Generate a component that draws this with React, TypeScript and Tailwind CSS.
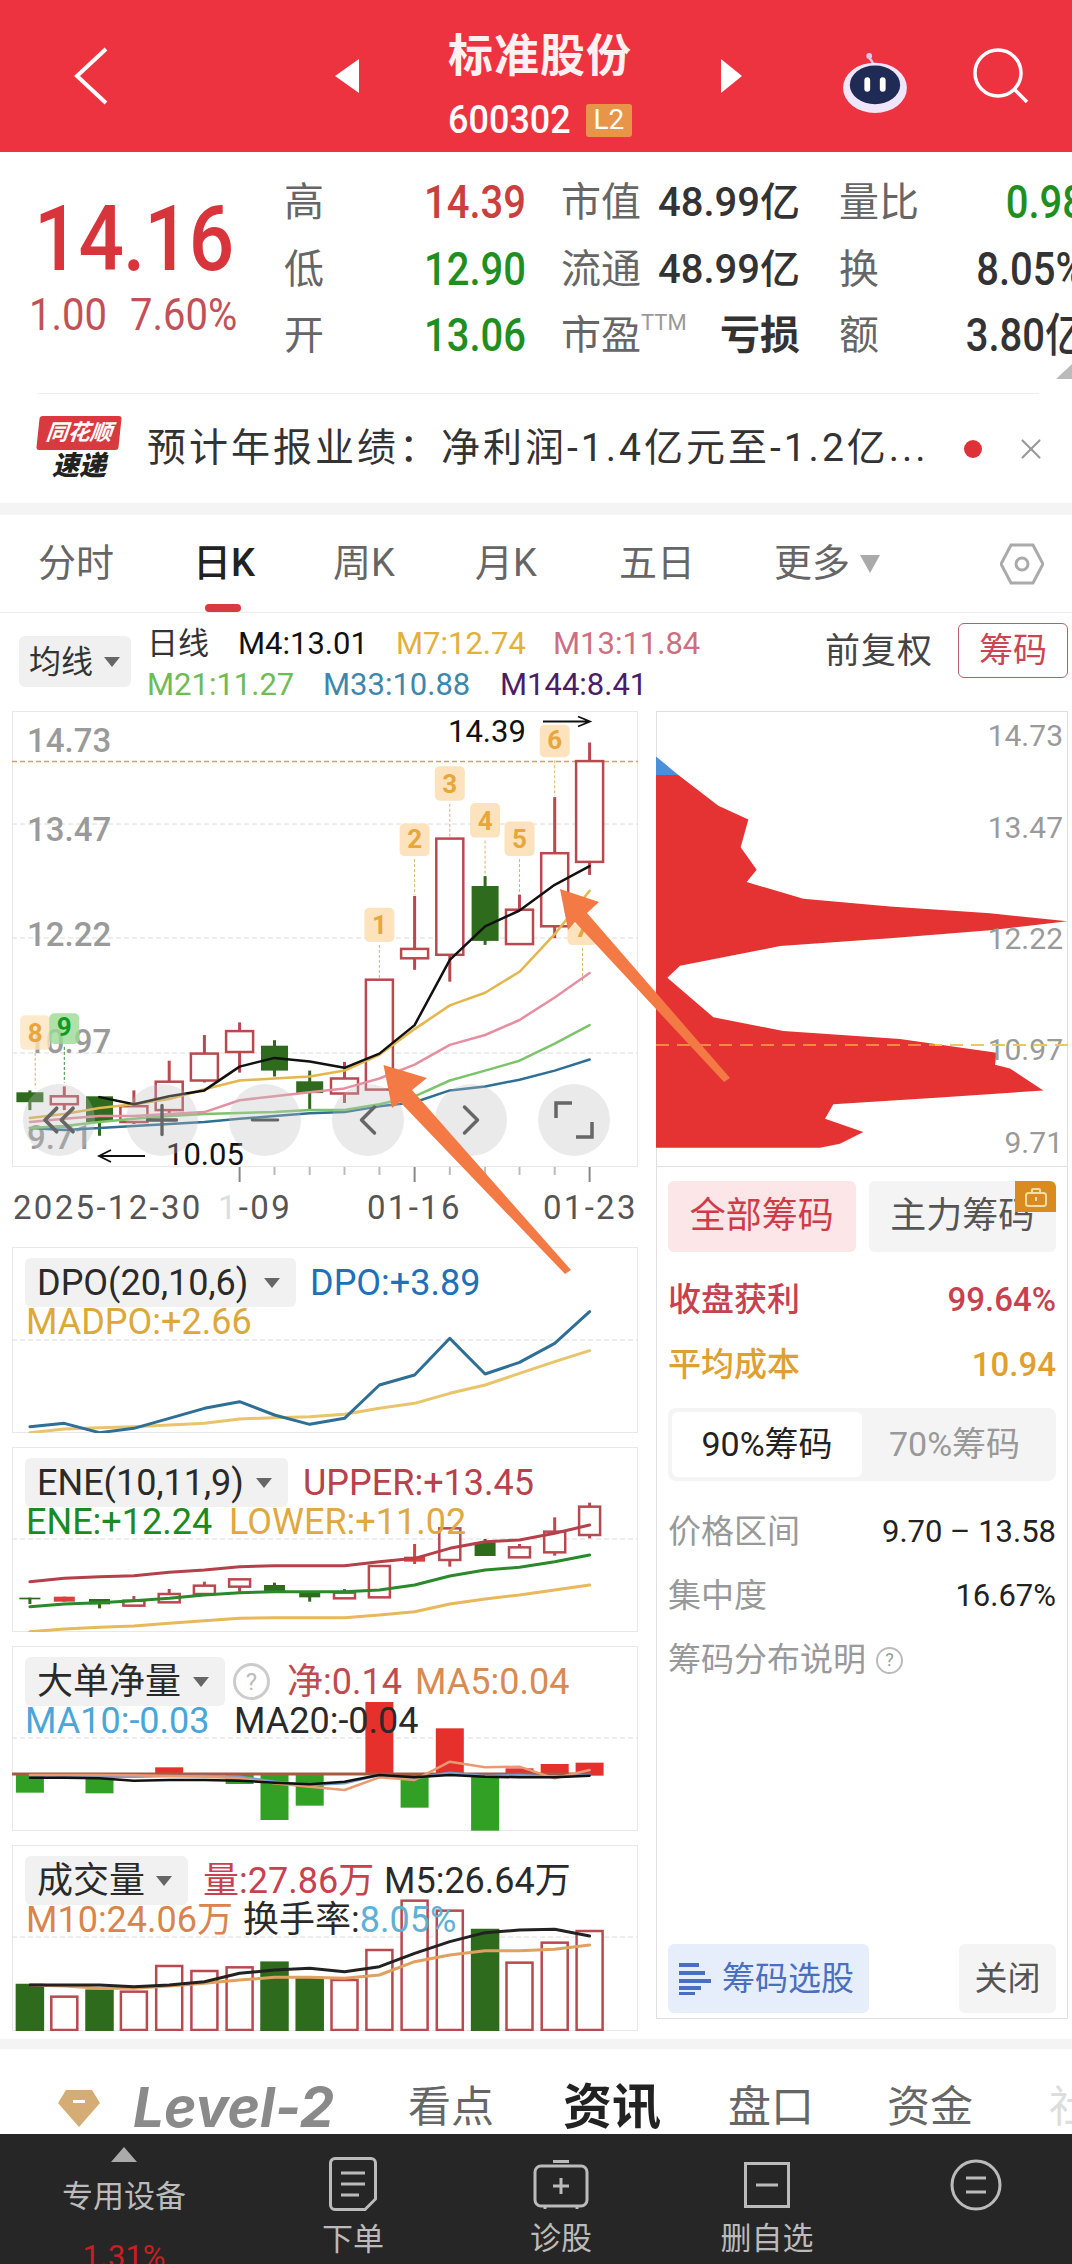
import { ChevronLeft, ChevronRight, ChevronsLeft, Minus, Plus, X as CloseIcon } from "lucide-react";
import type { ReactNode } from "react";

const CX = [72, 155, 240, 323, 408, 493, 578, 662, 747, 831, 915, 1000, 1085, 1170, 1253, 1338, 1422];
const px = (z: number) => +(z / 2.412).toFixed(1);
const mainY = (z: number) => +(620 + z / 2.53).toFixed(1);

type YFn = (z: number) => number;
// u = up candle, d = down candle, f = filled red
type Candle = [number, number, number, number, string];

function Line({ ys, y, color, w = 2.5, from = 0 }: { ys: number[]; y: YFn; color: string; w?: number; from?: number }) {
  const points = ys.map((v, i) => `${px(CX[i + from])},${y(v)}`).join(" ");
  return <polyline points={points} fill="none" stroke={color} strokeWidth={w} strokeLinejoin="round" strokeLinecap="round" />;
}

function Candles({ data, y, width }: { data: Candle[]; y: YFn; width: number }) {
  return (
    <>
      {data.map(([top, bot, hi, lo, kind], i) => {
        const cx = px(CX[i]);
        const color = kind === "d" ? "#2f6b1c" : kind === "f" ? "#d8413f" : "#b9484f";
        return (
          <g key={i}>
            <line x1={cx} x2={cx} y1={y(hi)} y2={y(lo)} stroke={color} strokeWidth={3} />
            <rect
              x={cx - width / 2}
              y={y(top)}
              width={width}
              height={y(bot) - y(top)}
              fill={kind === "u" ? "#fff" : color}
              stroke={color}
              strokeWidth={kind === "u" ? 2.5 : 0}
            />
          </g>
        );
      })}
    </>
  );
}

const mainCandles: Candle[] = [
  [1195, 1220, 1190, 1240, "d"],
  [1205, 1225, 1180, 1240, "u"],
  [1205, 1270, 1205, 1305, "d"],
  [1230, 1270, 1190, 1275, "u"],
  [1168, 1240, 1115, 1250, "u"],
  [1097, 1165, 1050, 1170, "u"],
  [1040, 1093, 1018, 1145, "u"],
  [1077, 1140, 1063, 1155, "d"],
  [1167, 1197, 1140, 1240, "d"],
  [1160, 1198, 1118, 1222, "u"],
  [910, 1188, 910, 1188, "u"],
  [832, 856, 698, 885, "u"],
  [553, 847, 553, 915, "u"],
  [673, 812, 648, 822, "d"],
  [733, 820, 695, 820, "u"],
  [590, 775, 448, 805, "u"],
  [357, 612, 310, 645, "u"],
];

const flags: [number, number, number, string, string][] = [
  [915, 728, 822, "1", "y"],
  [1000, 515, 605, "2", "y"],
  [1085, 370, 465, "3", "y"],
  [1170, 463, 558, "4", "y"],
  [1253, 510, 605, "5", "y"],
  [1338, 265, 355, "6", "y"],
  [1405, 770, 830, "7", "y"],
  [85, 1000, 1095, "8", "y"],
  [155, 995, 1080, "9", "g"],
];

function MainChart() {
  const gridLines = [824, 938, 1053];
  const axis: [string, number][] = [["14.73", 740], ["13.47", 829], ["12.22", 934], ["10.97", 1041], ["9.71", 1137]];
  return (
    <svg viewBox="12 711 626 456" width={626} height={456} className="absolute -left-px -top-px">
      <line x1={12} x2={638} y1={761.5} y2={761.5} stroke="#c9a45c" strokeDasharray="5 3" strokeWidth={1.5} />
      {gridLines.map((g) => (
        <line key={g} x1={12} x2={638} y1={g} y2={g} stroke="#dcdcdc" strokeDasharray="5 3" strokeWidth={1} />
      ))}
      {axis.map(([t, y]) => (
        <text key={t} x={27} y={y + 12} fontSize={33} fill="#9a9a9a" fontWeight={500}>
          {t}
        </text>
      ))}
      {flags.map(([x, top, bot, t, c]) => (
        <g key={t}>
          <line x1={px(x)} x2={px(x)} y1={mainY(bot)} y2={mainY(bot + 90)} stroke={c === "g" ? "#3a8a3a" : "#d9b36a"} strokeDasharray="3 2" strokeWidth={1} />
          <rect x={px(x) - 15} y={mainY(top)} width={30} height={mainY(bot) - mainY(top) - 3} rx={5} fill={c === "g" ? "#9bdb93" : "#fce3be"} fillOpacity={t === "8" || t === "9" ? 0.8 : 1} />
          <text x={px(x)} y={mainY(bot) - 11} textAnchor="middle" fontSize={26} fontWeight={700} fill={c === "g" ? "#119a22" : "#e8a63c"}>
            {t}
          </text>
        </g>
      ))}
      <Candles data={mainCandles} y={mainY} width={27} />
      <Line y={mainY} color="#2e6f95" from={0} ys={[1285, 1290, 1285, 1280, 1275, 1270, 1262, 1255, 1248, 1245, 1230, 1220, 1190, 1180, 1163, 1140, 1112]} />
      <Line y={mainY} color="#7cc46c" ys={[1285, 1280, 1270, 1262, 1255, 1250, 1247, 1245, 1240, 1240, 1225, 1205, 1165, 1140, 1115, 1072, 1025]} />
      <Line y={mainY} color="#e58fa0" ys={[1270, 1262, 1255, 1255, 1250, 1245, 1215, 1205, 1195, 1185, 1160, 1125, 1075, 1050, 1012, 955, 893]} />
      <Line y={mainY} color="#e3b64e" ys={[1260, 1250, 1235, 1225, 1212, 1187, 1165, 1160, 1155, 1140, 1100, 1035, 975, 943, 890, 795, 685]} />
      <Line y={mainY} color="#111" from={2} ys={[1207, 1225, 1205, 1190, 1130, 1108, 1117, 1133, 1097, 1025, 860, 775, 735, 670, 623]} />
      <text x={448} y={742} fontSize={31} fill="#111">14.39</text>
      <path d="M543 721.5H589M578 716.5L590 721.5L578 726.5" fill="none" stroke="#111" strokeWidth={1.8} />
      <text x={166} y={1165} fontSize={31} fill="#111">10.05</text>
      <path d="M145 1156H100M111 1150L99 1156L111 1162" fill="none" stroke="#111" strokeWidth={1.8} />
    </svg>
  );
}

function RoundBtn({ children }: { children: ReactNode }) {
  return <div className="flex size-[72px] items-center justify-center rounded-full bg-[rgba(190,190,190,0.32)] text-[#666]">{children}</div>;
}

function ChipChart() {
  const z = (a: number, b: number) => `${640 + a / 3},${(620 + b / 2.53).toFixed(1)}`;
  const red: [number, number][] = [
    [48, 392], [115, 392], [235, 470], [325, 505], [302, 575], [350, 632], [320, 663], [490, 705], [750, 725], [1050, 742], [1282, 762],
    [1050, 785], [750, 805], [420, 825], [120, 875], [82, 905], [220, 1005], [430, 1040], [780, 1060], [1070, 1095], [1065, 1125],
    [1110, 1135], [1210, 1190], [900, 1208], [580, 1225], [555, 1262], [670, 1295], [600, 1325], [540, 1335], [48, 1335],
  ];
  const labels: [string, number][] = [["14.73", 735], ["13.47", 827], ["12.22", 938], ["10.97", 1049], ["9.71", 1142]];
  return (
    <svg viewBox="656 711 412 454" width={412} height={454} className="absolute -left-px -top-px">
      <polygon points={red.map(([a, b]) => z(a, b)).join(" ")} fill="#e53232" />
      <polygon points={[z(48, 345), z(115, 392), z(48, 392)].join(" ")} fill="#4a8fdc" />
      {labels.map(([t, y]) => (
        <text key={t} x={1063} y={y + 11} textAnchor="end" fontSize={30} fill="#9a9a9a">
          {t}
        </text>
      ))}
      <line x1={656} x2={1068} y1={1045} y2={1045} stroke="#ecc75a" strokeDasharray="13 8" strokeWidth={2} />
      <line x1={656} x2={935} y1={1045} y2={1045} stroke="#f08a3c" strokeDasharray="13 8" strokeWidth={2} />
    </svg>
  );
}

function Panel({ height, btn, btnW, row1, row2, children }: { height: number; btn: string; btnW: number; row1: ReactNode; row2: ReactNode; children: ReactNode }) {
  return (
    <div className="relative w-[626px] border border-[#e8e8e8] bg-white" style={{ height }}>
      {children}
      <div className="relative pl-[12px] pt-[10px] text-[36px] leading-[40px]">
        <div className="flex items-center">
          <div className="flex h-[49px] items-center justify-between rounded-md bg-[rgba(240,240,240,0.9)] pl-[12px] pr-[16px] text-[#2a2a2a]" style={{ width: btnW }}>
            <span>{btn}</span>
            <span className="size-0 border-x-[8px] border-t-[10px] border-x-transparent border-t-[#666]" />
          </div>
          {row1}
        </div>
        <div className="-mt-[5px] flex whitespace-nowrap">{row2}</div>
      </div>
    </div>
  );
}

const dpoBlue = [560, 550, 578, 565, 535, 505, 485, 525, 553, 535, 435, 405, 295, 402, 367, 310, 215];
const dpoYellow = [578, 567, 563, 560, 555, 550, 537, 533, 530, 523, 505, 490, 460, 435, 400, 365, 332];
const eneCandles: Candle[] = [
  [1073, 1078, 1073, 1092, "d"],
  [1070, 1085, 1070, 1085, "f"],
  [1077, 1093, 1077, 1105, "d"],
  [1082, 1097, 1068, 1097, "u"],
  [1062, 1087, 1047, 1087, "u"],
  [1037, 1062, 1025, 1062, "u"],
  [1018, 1040, 1018, 1057, "u"],
  [1035, 1055, 1028, 1055, "d"],
  [1058, 1072, 1058, 1085, "d"],
  [1058, 1075, 1047, 1075, "u"],
  [978, 1072, 978, 1072, "u"],
  [950, 965, 912, 972, "f"],
  [865, 960, 865, 980, "u"],
  [907, 948, 897, 948, "d"],
  [922, 952, 912, 952, "u"],
  [875, 937, 832, 947, "u"],
  [800, 885, 788, 895, "u"],
];
const netBars: [number, number, number, string][] = [
  [0, 405, 458, "g"], [2, 405, 460, "g"], [4, 382, 405, "r"], [6, 405, 432, "g"], [7, 405, 540, "g"], [8, 405, 497, "g"], [10, 186, 405, "r"],
  [11, 405, 503, "g"], [12, 265, 405, "r"], [13, 405, 572, "g"], [14, 385, 405, "r"], [15, 372, 405, "r"], [16, 368, 407, "r"],
];
const volTops: [number, string][] = [
  [1035, "d"], [1070, "u"], [1052, "d"], [1055, "u"], [978, "u"], [993, "u"], [982, "u"], [968, "d"], [1015, "d"], [1020, "u"], [930, "u"], [782, "u"], [812, "u"], [870, "d"], [968, "u"], [908, "u"], [873, "u"],
];

function QuoteRow({ label, value, valueCls, label2, value2, value2Bold, label3, value3, value3Cls }: { label: string; value: string; valueCls: string; label2: ReactNode; value2: string; value2Bold?: boolean; label3: string; value3: string; value3Cls: string }) {
  return (
    <div className="grid h-[66.5px] grid-cols-[140px_99px_38px_95px_144px_39px_86px_160px] items-center whitespace-nowrap text-[40px]">
      <span className="text-[#666]">{label}</span>
      <span className={`scale-y-[1.15] text-right font-medium ${valueCls}`}>{value}</span>
      <span />
      <span className="text-[#666]">{label2}</span>
      <span className={`text-right text-[#333] ${value2Bold ? "font-bold" : "font-medium"}`}>{value2}</span>
      <span />
      <span className="text-[#666]">{label3}</span>
      <span className={`scale-y-[1.15] text-right font-medium ${value3Cls}`}>{value3}</span>
    </div>
  );
}

function Stat({ label, value, cls }: { label: string; value: string; cls: string }) {
  return (
    <div className={`flex items-center justify-between text-[33px] ${cls}`}>
      <span>{label}</span>
      <span>{value}</span>
    </div>
  );
}

function Robot() {
  return (
    <svg viewBox="0 0 66 62" className="mt-[14px] h-[60px] w-[66px]">
      <circle cx={27} cy={3} r={3} fill="#d9c8ee" />
      <path d="M27 5 Q30 8 31 11" stroke="#d9c8ee" strokeWidth={2.5} fill="none" />
      <ellipse cx={33} cy={36} rx={33} ry={26} fill="#efe6fb" />
      <ellipse cx={33} cy={33} rx={26} ry={20} fill="#1f2a55" />
      <rect x={22} y={25} width={6} height={15} rx={3} fill="#fff" />
      <rect x={38} y={25} width={6} height={15} rx={3} fill="#fff" />
    </svg>
  );
}

export default function App() {
  const tabs: [string, number][] = [["分时", 155], ["日K", 140], ["周K", 142], ["月K", 144], ["五日", 155]];
  return (
    <div className="relative flex h-[2264px] w-[1072px] flex-col overflow-hidden bg-white font-['Roboto','Noto_Sans_CJK_SC',sans-serif]">
      {/* header */}
      <div className="flex h-[152px] shrink-0 items-center bg-[#ee3340] text-white">
        <svg viewBox="0 0 34 58" className="ml-[74px] h-[58px] w-[34px]">
          <path d="M32 2L3 29L32 56" fill="none" stroke="#fff" strokeWidth={4} transform="translate(0 0)" />
        </svg>
        <span className="ml-[227px] size-0 border-y-[17px] border-r-[24px] border-y-transparent border-r-white" />
        <div className="ml-[89px] flex w-[184px] flex-col pt-[14px]">
          <span className="text-[45px] font-bold leading-[56px] tracking-[1px] text-[#fff1f1]">标准股份</span>
          <div className="mt-[18px] flex items-center">
            <span className="scale-y-[1.1] text-[36px] font-medium leading-[34px]">600302</span>
            <span className="ml-[15px] flex h-[33px] w-[48px] items-center justify-center rounded-[3px] bg-[#e8954a] text-[28px] leading-none">L2</span>
          </div>
        </div>
        <span className="ml-[89px] size-0 border-y-[17px] border-l-[21px] border-y-transparent border-l-white" />
        <div className="ml-[100px]">
          <Robot />
        </div>
        <svg viewBox="0 0 56 56" className="ml-[65px] size-[56px]">
          <circle cx={25} cy={25} r={23} fill="none" stroke="#fff" strokeWidth={3.5} />
          <path d="M42 42L54 54" stroke="#fff" strokeWidth={3.5} />
        </svg>
      </div>

      {/* quote */}
      <div className="relative flex h-[241px] shrink-0 items-start pt-[18px]">
        <div className="w-[284px] shrink-0 pl-[34px] pt-[34px] text-[#d8343b]">
          <div className="origin-left scale-y-[1.14] text-[80px] font-medium leading-[70px] tracking-[-1px]">14.16</div>
          <div className="-ml-[5px] mt-[22px] flex scale-y-[1.1] text-[40px] leading-[40px] text-[#c25157]">
            <span className="w-[101px]">1.00</span>
            <span>7.60%</span>
          </div>
        </div>
        <div className="w-[1000px] shrink-0">
          <QuoteRow label="高" value="14.39" valueCls="text-[#c9403f]" label2="市值" value2="48.99亿" label3="量比" value3="0.98" value3Cls="text-[#1f8f1f]" />
          <QuoteRow label="低" value="12.90" valueCls="text-[#1f8f1f]" label2="流通" value2="48.99亿" label3="换" value3="8.05%" value3Cls="text-[#333]" />
          <QuoteRow
            label="开"
            value="13.06"
            valueCls="text-[#1f8f1f]"
            label2={
              <span className="flex items-start">
                市盈<span className="mt-[6px] text-[22px] leading-[22px] text-[#999]">TTM</span>
              </span>
            }
            value2="亏损"
            value2Bold
            label3="额"
            value3="3.80亿"
            value3Cls="text-[#333]"
          />
        </div>
        <span className="absolute right-0 top-[212px] size-0 border-b-[15px] border-l-[16px] border-b-[#bbb] border-l-transparent" />
      </div>

      {/* news */}
      <div className="ml-[38px] mr-[33px] flex h-[110px] shrink-0 items-center border-t border-[#eee]">
        <div className="relative flex h-[65px] w-[82px] shrink-0 flex-col items-center">
          <div className="flex h-[35px] w-[82px] -skew-x-6 items-center justify-center rounded-[3px] bg-[#d93a3f] text-[22px] font-bold italic leading-none text-white">同花顺</div>
          <span className="mt-[1px] text-[27px] font-black italic leading-[30px] text-[#222]">速递</span>
        </div>
        <span className="ml-[27px] w-[817px] shrink-0 whitespace-nowrap text-[39px] leading-none tracking-[3px] text-[#333]">预计年报业绩：净利润-1.4亿元至-1.2亿...</span>
        <span className="size-[18px] shrink-0 rounded-full bg-[#dd3338]" />
        <CloseIcon className="ml-[32px] size-[34px] shrink-0 text-[#999]" strokeWidth={1.5} />
      </div>
      <div className="h-[12px] shrink-0 bg-[#f4f4f4]" />

      {/* kline tabs */}
      <div className="relative flex h-[98px] shrink-0 items-center border-b border-[#eee] pl-[38px] text-[38px] text-[#666]">
        {tabs.map(([t, w]) => (
          <span key={t} className={t === "日K" ? "font-medium text-[#222]" : ""} style={{ width: w }}>
            {t}
          </span>
        ))}
        <span>更多</span>
        <span className="ml-[10px] size-0 border-x-[10px] border-t-[18px] border-x-transparent border-t-[#aaa]" />
        <svg viewBox="0 0 44 42" className="absolute left-[1000px] top-[28px] h-[42px] w-[44px]">
          <polygon points="11,2 33,2 43,21 33,40 11,40 1,21" fill="none" stroke="#aaa" strokeWidth={3} />
          <circle cx={22} cy={21} r={6} fill="none" stroke="#aaa" strokeWidth={3} />
        </svg>
        <span className="absolute bottom-0 left-[205px] h-[8px] w-[36px] rounded-full bg-[#d93a3f]" />
      </div>

      {/* legend row */}
      <div className="flex h-[98px] shrink-0 items-start pl-[19px] pt-[10px]">
        <div className="mt-[13px] flex h-[51px] w-[112px] items-center justify-between rounded-md bg-[#f0f0f0] pl-[10px] pr-[11px] text-[32px] text-[#333]">
          均线
          <span className="size-0 border-x-[8px] border-t-[10px] border-x-transparent border-t-[#666]" />
        </div>
        <div className="ml-[16px] w-[560px] whitespace-nowrap text-[31px] leading-[41px]">
          <div className="flex">
            <span className="w-[91px] text-[#333]">日线</span>
            <span className="w-[158px] text-[#111]">M4:13.01</span>
            <span className="w-[157px] text-[#e3b03c]">M7:12.74</span>
            <span className="text-[#cc6f80]">M13:11.84</span>
          </div>
          <div className="flex">
            <span className="w-[176px] text-[#6fbb55]">M21:11.27</span>
            <span className="w-[177px] text-[#3d87ad]">M33:10.88</span>
            <span className="text-[#4b1d66]">M144:8.41</span>
          </div>
        </div>
        <span className="ml-[118px] mt-[6px] w-[133px] shrink-0 text-[35px] leading-[46px] tracking-[1px] text-[#444]">前复权</span>
        <div className="flex h-[55px] w-[110px] shrink-0 items-center justify-center rounded-md border border-[#b5606a] text-[34px] text-[#cc4553]">筹码</div>
      </div>

      {/* charts */}
      <div className="flex h-[1328px] shrink-0">
        <div className="ml-[12px] flex w-[626px] shrink-0 flex-col">
          <div className="relative h-[456px] shrink-0 border border-[#e8e8e8]">
            <MainChart />
            <div className="absolute -left-px top-[372px] flex gap-[31px] pl-[11px]">
              <RoundBtn><ChevronsLeft className="size-[56px]" strokeWidth={1.6} /></RoundBtn>
              <RoundBtn><Plus className="size-[50px]" strokeWidth={1.6} /></RoundBtn>
              <RoundBtn><Minus className="size-[44px]" strokeWidth={1.6} /></RoundBtn>
              <RoundBtn><ChevronLeft className="size-[52px]" strokeWidth={1.6} /></RoundBtn>
              <RoundBtn><ChevronRight className="size-[52px]" strokeWidth={1.6} /></RoundBtn>
              <RoundBtn>
                <svg viewBox="0 0 40 40" className="size-[40px]">
                  <path d="M2 18V3H18M38 22V37H22" fill="none" stroke="#666" strokeWidth={3.5} />
                </svg>
              </RoundBtn>
            </div>
          </div>
          <svg viewBox="0 0 626 15" width={626} height={15} className="shrink-0">
            {CX.slice(6).map((c, i) => (
              <line key={c} x1={px(c) - 12} x2={px(c) - 12} y1={0} y2={i % 5 === 0 ? 15 : 8} stroke={i % 5 === 0 ? "#888" : "#bbb"} strokeWidth={2} />
            ))}
          </svg>
          <div className="relative flex h-[51px] shrink-0 items-start whitespace-nowrap pt-[6px] text-[33px] leading-[40px] tracking-[2.3px] text-[#555]">
            <span className="ml-[1px] w-[205px]">2025-12-30</span>
            <span>
              <span className="text-[#ddd]">1</span>-09
            </span>
            <span className="absolute left-[355px]">01-16</span>
            <span className="absolute left-[531px]">01-23</span>
          </div>

          <div className="mt-[14px]" />
          <Panel
            height={186}
            btn="DPO(20,10,6)"
            btnW={271}
            row1={<span className="ml-[14px] text-[#1e70b8]">DPO:+3.89</span>}
            row2={<span className="ml-[1px] text-[#dda83a]">MADPO:+2.66</span>}
          >
            <svg viewBox="12 1247 626 186" width={626} height={186} className="absolute -left-px -top-px">
              <line x1={12} x2={638} y1={1340} y2={1340} stroke="#dcdcdc" strokeDasharray="5 3" />
              <Line y={(v) => 1240 + v / 3} color="#e8c46c" w={3} ys={dpoYellow} />
              <Line y={(v) => 1240 + v / 3} color="#2e6f95" w={3} ys={dpoBlue} />
            </svg>
          </Panel>

          <div className="mt-[14px]" />
          <Panel
            height={185}
            btn="ENE(10,11,9)"
            btnW={263}
            row1={<span className="ml-[15px] text-[#b8414a]">UPPER:+13.45</span>}
            row2={
              <>
                <span className="ml-[1px] w-[203px] text-[#1a8a22]">ENE:+12.24</span>
                <span className="text-[#e0a840]">LOWER:+11.02</span>
              </>
            }
          >
            <svg viewBox="12 1447 626 185" width={626} height={185} className="absolute -left-px -top-px">
              <line x1={12} x2={638} y1={1539} y2={1539} stroke="#dcdcdc" strokeDasharray="5 3" />
              <Candles data={eneCandles} y={(v) => 1240 + v / 3} width={21} />
              <Line y={(v) => 1240 + v / 3} color="#e8b85a" w={3} ys={[1175, 1167, 1162, 1158, 1150, 1142, 1135, 1133, 1133, 1133, 1125, 1115, 1092, 1077, 1065, 1050, 1035]} />
              <Line y={(v) => 1240 + v / 3} color="#2a8a2a" w={3} ys={[1100, 1092, 1088, 1082, 1075, 1065, 1058, 1055, 1055, 1055, 1050, 1035, 1008, 990, 982, 965, 945]} />
              <Line y={(v) => 1240 + v / 3} color="#b5404a" w={3} ys={[1025, 1015, 1010, 1007, 997, 990, 980, 977, 977, 977, 965, 955, 925, 905, 900, 880, 855]} />
            </svg>
          </Panel>

          <div className="mt-[14px]" />
          <Panel
            height={185}
            btn="大单净量"
            btnW={200}
            row1={
              <>
                <span className="ml-[8px] flex size-[37px] items-center justify-center rounded-full border-[3px] border-[#ccc] text-[24px] leading-none text-[#bbb]">?</span>
                <span className="ml-[17px] w-[128px] text-[#c04a50]">净:0.14</span>
                <span className="text-[#d88a50]">MA5:0.04</span>
              </>
            }
            row2={
              <>
                <span className="w-[209px] text-[#4aa5d8]">MA10:-0.03</span>
                <span className="text-[#2a2a2a]">MA20:-0.04</span>
              </>
            }
          >
            <svg viewBox="12 1646 626 185" width={626} height={185} className="absolute -left-px -top-px">
              <line x1={12} x2={638} y1={1738} y2={1738} stroke="#dcdcdc" strokeDasharray="5 3" />
              {netBars.map(([i, a, b, k]) => (
                <rect key={i} x={px(CX[i]) - 14} y={1640 + a / 3} width={28} height={(b - a) / 3} fill={k === "g" ? "#32a024" : "#e5302c"} />
              ))}
              <line x1={12} x2={590} y1={1774} y2={1774} stroke="#a85a40" strokeWidth={3} />
              <Line y={(v) => 1640 + v / 3} color="#7a9ccf" ys={[413, 412, 410, 410, 408, 408, 410, 425, 435, 430, 405, 415, 398, 408, 405, 410, 405]} />
              <Line y={(v) => 1640 + v / 3} color="#e89a70" ys={[405, 405, 405, 406, 408, 410, 415, 430, 440, 450, 412, 420, 365, 382, 380, 415, 390]} />
              <Line y={(v) => 1640 + v / 3} color="#111" ys={[413, 413, 415, 422, 420, 420, 422, 428, 433, 425, 405, 412, 405, 410, 412, 412, 407]} />
            </svg>
          </Panel>

          <div className="mt-[14px]" />
          <Panel
            height={186}
            btn="成交量"
            btnW={163}
            row1={
              <>
                <span className="ml-[15px] w-[181px] text-[#c8414f]">量:27.86万</span>
                <span className="text-[#2a2a2a]">M5:26.64万</span>
              </>
            }
            row2={
              <>
                <span className="ml-[1px] w-[217px] text-[#d8844c]">M10:24.06万</span>
                <span className="text-[#2a2a2a]">换手率:</span>
                <span className="text-[#5fb0d4]">8.05%</span>
              </>
            }
          >
            <svg viewBox="12 1845 626 186" width={626} height={186} className="absolute -left-px -top-px">
              <line x1={12} x2={638} y1={1937} y2={1937} stroke="#dcdcdc" strokeDasharray="5 3" />
              {volTops.map(([t, k], i) => (
                <rect
                  key={i}
                  x={px(CX[i]) - 13}
                  y={1640 + t / 3}
                  width={26}
                  height={(1170 - t) / 3}
                  fill={k === "d" ? "#2f6b1c" : "#fff"}
                  stroke={k === "d" ? "#2f6b1c" : "#b9484f"}
                  strokeWidth={2.5}
                />
              ))}
              <Line y={(v) => 1640 + v / 3} color="#e0a060" w={3} ys={[1035, 1038, 1045, 1045, 1038, 1030, 1020, 1012, 1012, 1015, 1005, 965, 945, 932, 932, 928, 915]} />
              <Line y={(v) => 1640 + v / 3} color="#222" w={3} ys={[1035, 1035, 1035, 1040, 1035, 1025, 1000, 990, 985, 995, 980, 940, 905, 878, 870, 868, 888]} />
            </svg>
          </Panel>
        </div>

        {/* chip panel */}
        <div className="relative ml-[18px] flex h-[1308px] w-[412px] shrink-0 flex-col border border-[#e0e0e0] px-[11px] pb-[5px]">
          <ChipChart />
          <div className="mt-[454px] -mx-[11px] border-t border-[#e0e0e0]" />
          <div className="mt-[14px] flex gap-[13px] text-[36px] leading-[71px]">
            <div className="h-[71px] w-[188px] rounded-md bg-[#fce6e8] text-center text-[#ce3c4a]">全部筹码</div>
            <div className="relative h-[71px] w-[188px] rounded-md bg-[#f4f4f4] text-center text-[#555]">
              主力筹码
              <div className="absolute right-0 top-0 flex h-[31px] w-[41px] items-center justify-center rounded-tr-md bg-[#d98b1f]">
                <svg viewBox="0 0 24 20" className="h-[20px] w-[24px]">
                  <rect x={2} y={6} width={20} height={13} rx={2.5} fill="none" stroke="#f6dca8" strokeWidth={2} />
                  <path d="M8 6V3a1 1 0 0 1 1-1h6a1 1 0 0 1 1 1v3" fill="none" stroke="#f6dca8" strokeWidth={2} />
                  <rect x={11} y={10} width={2} height={4} fill="#f6dca8" />
                </svg>
              </div>
            </div>
          </div>
          <div className="mt-[27px] flex flex-col gap-[23px] leading-[42px]">
            <Stat label="收盘获利" value="99.64%" cls="text-[#c8414f] font-medium" />
            <Stat label="平均成本" value="10.94" cls="text-[#e0a030] font-medium" />
          </div>
          <div className="mt-[22px] flex h-[73px] items-center rounded-lg bg-[#f4f4f4] px-[4px] text-[34px]">
            <div className="flex h-[65px] w-[190px] items-center justify-center rounded-md bg-white text-[#222]">90%筹码</div>
            <div className="ml-[27px] text-[#999]">70%筹码</div>
          </div>
          <div className="mt-[30px] flex flex-col gap-[22px] text-[31px] leading-[42px]">
            <div className="flex items-center justify-between">
              <span className="text-[33px] text-[#999]">价格区间</span>
              <span className="text-[#222]">9.70 – 13.58</span>
            </div>
            <div className="flex items-center justify-between">
              <span className="text-[33px] text-[#999]">集中度</span>
              <span className="text-[#222]">16.67%</span>
            </div>
            <div className="flex items-center text-[33px] text-[#999]">
              筹码分布说明
              <span className="ml-[10px] flex size-[27px] items-center justify-center rounded-full border-2 border-[#bbb] text-[18px] leading-none">?</span>
            </div>
          </div>
          <div className="mt-auto flex justify-between">
            <div className="flex h-[69px] w-[201px] items-center rounded-md bg-[#e6eefb] pl-[11px] text-[33px] text-[#4a6fc0]">
              <svg viewBox="0 0 32 32" className="mr-[11px] size-[32px]">
                <path d="M0 2H20M0 10H26M0 18H32M0 25H22M0 31H16" stroke="#4a6fc0" strokeWidth={4} />
              </svg>
              筹码选股
            </div>
            <div className="flex h-[69px] w-[97px] items-center justify-center rounded-md bg-[#f4f4f4] text-[33px] text-[#555]">关闭</div>
          </div>
        </div>
      </div>

      {/* news tabs */}
      <div className="flex h-[95px] shrink-0 items-center overflow-hidden whitespace-nowrap border-t-[10px] border-[#f4f4f4] pl-[58px] pt-[32px] text-[43px] leading-none text-[#666]">
        <svg viewBox="0 0 42 38" className="h-[38px] w-[42px] shrink-0">
          <polygon points="8,1 34,1 42,14 21,38 0,14" fill="#d4ac74" />
          <rect x={15} y={11} width={12} height={3} fill="#fff" />
        </svg>
        <span className="ml-[33px] w-[275px] shrink-0 font-['Inter',sans-serif] text-[55px] font-bold italic text-[#8a8a8a]">Level-2</span>
        <span className="w-[155px] shrink-0">看点</span>
        <span className="w-[165px] shrink-0 text-[49px] font-bold text-[#222]">资讯</span>
        <span className="w-[159px] shrink-0">盘口</span>
        <span className="w-[162px] shrink-0">资金</span>
        <span className="shrink-0 text-[#ddd]">社</span>
      </div>

      {/* bottom bar */}
      <div className="flex flex-1 bg-[#262626] text-[31px] leading-none text-[#bbb]">
        <div className="flex w-[248px] flex-col items-center pt-[13px]">
          <span className="size-0 border-x-[13px] border-b-[15px] border-x-transparent border-b-[#aaa]" />
          <span className="mt-[19px]">专用设备</span>
          <span className="mt-[29px] text-[31px] text-[#c62020]">1.31%</span>
        </div>
        <div className="flex w-[210px] flex-col items-center pt-[23px]">
          <svg viewBox="0 0 48 54" className="h-[54px] w-[48px]">
            <path d="M6 1.5H42A4.5 4.5 0 0 1 46.5 6V42L36 52.5H6A4.5 4.5 0 0 1 1.5 48V6A4.5 4.5 0 0 1 6 1.5ZM12 16H36M12 27H36M12 38H30" fill="none" stroke="#bbb" strokeWidth={3} />
          </svg>
          <span className="mt-[13px]">下单</span>
        </div>
        <div className="flex w-[206px] flex-col items-center pt-[26px]">
          <svg viewBox="0 0 56 50" className="h-[50px] w-[56px]">
            <path d="M20 1.5H36M8 6H48A6 6 0 0 1 54 12V40A6 6 0 0 1 48 46H8A6 6 0 0 1 2 40V12A6 6 0 0 1 8 6ZM28 18V34M20 26H36M12 46V49M44 46V49" fill="none" stroke="#bbb" strokeWidth={3} />
          </svg>
          <span className="mt-[13px]">诊股</span>
        </div>
        <div className="flex w-[206px] flex-col items-center pt-[28px]">
          <svg viewBox="0 0 46 46" className="size-[46px]">
            <path d="M1.5 1.5H44.5V44.5H1.5ZM12 23H34" fill="none" stroke="#bbb" strokeWidth={3} />
          </svg>
          <span className="mt-[15px]">删自选</span>
        </div>
        <div className="flex flex-1 flex-col items-center pl-[10px] pt-[25px]">
          <svg viewBox="0 0 52 52" className="size-[52px]">
            <circle cx={26} cy={26} r={24} fill="none" stroke="#bbb" strokeWidth={3} />
            <path d="M16 19H36M16 33H36" stroke="#bbb" strokeWidth={3} />
          </svg>
        </div>
      </div>

      {/* annotation arrows */}
      <svg viewBox="0 0 1072 2264" width={1072} height={2264} className="pointer-events-none absolute left-0 top-0">
        <polygon points="383.5,1065 427,1078 412,1090 571,1270 565,1274 400,1102 392,1108" fill="#f47a45" />
        <polygon points="560,889 599,902 587,913 730,1078 724,1082 575,922 568,930" fill="#f47a45" />
      </svg>
    </div>
  );
}
